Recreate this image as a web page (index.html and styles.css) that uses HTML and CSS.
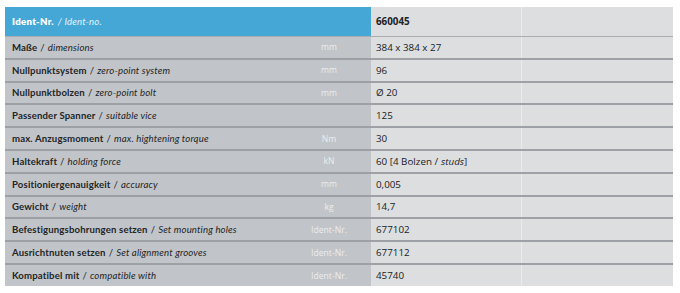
FILE: index.html
```html
<!DOCTYPE html>
<html>
<head>
<meta charset="utf-8">
<link rel="stylesheet" href="styles.css">
</head>
<body>
<div class="table">
  <div class="row head">
    <div class="label"><b>Ident-Nr.</b> <span class="it">/ Ident-no.</span></div>
    <div class="unit"></div>
    <div class="val"><b>660045</b></div>
    <div class="extra"></div>
  </div>
  <div class="row">
    <div class="label"><b>Maße</b> / <i>dimensions</i></div>
    <div class="unit">mm</div>
    <div class="val">384 x 384 x 27</div>
    <div class="extra"></div>
  </div>
  <div class="row">
    <div class="label"><b>Nullpunktsystem</b> / <i>zero-point system</i></div>
    <div class="unit">mm</div>
    <div class="val">96</div>
    <div class="extra"></div>
  </div>
  <div class="row">
    <div class="label"><b>Nullpunktbolzen</b> / <i>zero-point bolt</i></div>
    <div class="unit">mm</div>
    <div class="val">Ø 20</div>
    <div class="extra"></div>
  </div>
  <div class="row">
    <div class="label"><b>Passender Spanner</b> / <i>suitable vice</i></div>
    <div class="unit"></div>
    <div class="val">125</div>
    <div class="extra"></div>
  </div>
  <div class="row">
    <div class="label"><b>max. Anzugsmoment</b> / <i>max. hightening torque</i></div>
    <div class="unit">Nm</div>
    <div class="val">30</div>
    <div class="extra"></div>
  </div>
  <div class="row">
    <div class="label"><b>Haltekraft</b> / <i>holding force</i></div>
    <div class="unit">kN</div>
    <div class="val">60 [4 Bolzen / <i>studs</i>]</div>
    <div class="extra"></div>
  </div>
  <div class="row">
    <div class="label"><b>Positioniergenauigkeit</b> / <i>accuracy</i></div>
    <div class="unit">mm</div>
    <div class="val">0,005</div>
    <div class="extra"></div>
  </div>
  <div class="row">
    <div class="label"><b>Gewicht</b> / <i>weight</i></div>
    <div class="unit">kg</div>
    <div class="val">14,7</div>
    <div class="extra"></div>
  </div>
  <div class="row">
    <div class="label"><b>Befestigungsbohrungen setzen</b> / <i>Set mounting holes</i></div>
    <div class="unit">Ident-Nr.</div>
    <div class="val">677102</div>
    <div class="extra"></div>
  </div>
  <div class="row">
    <div class="label"><b>Ausrichtnuten setzen</b> / <i>Set alignment grooves</i></div>
    <div class="unit">Ident-Nr.</div>
    <div class="val">677112</div>
    <div class="extra"></div>
  </div>
  <div class="row last">
    <div class="label"><b>Kompatibel mit</b> / <i>compatible with</i></div>
    <div class="unit">Ident-Nr.</div>
    <div class="val">45740</div>
    <div class="extra"></div>
  </div>
</div>
</body>
</html>
```

FILE: styles.css
```css
html, body {
  margin: 0;
  padding: 0;
  background: #ffffff;
}
body {
  padding: 7px 0 0 5px;
}
.table {
  width: 668px;
  display: flex;
  flex-direction: column;
}
.row {
  display: grid;
  grid-template-columns: 286px 80px 151px 151px;
  height: 20.8px;
  border-bottom: 2px solid #9da1a6;
}
.row.last {
  border-bottom: none;
  height: 21.5px;
}
.row.head {
  height: 29px;
  border-bottom: 1px solid #a9adb1;
}
.label, .unit, .val, .extra {
  display: flex;
  align-items: center;
}
.label {
  background: #c1c4c9;
  padding-left: 7px;
  font-family: "Lato", "Noto Sans", sans-serif;
  font-size: 9.6px;
  color: #222426;
  white-space: nowrap;
  letter-spacing: 0.15px;
}
.label b {
  font-weight: 700;
  margin-right: 3px;
}
.label i {
  margin-left: 3px;
  font-style: italic;
  font-weight: 400;
}
.unit {
  background: #c1c4c9;
  justify-content: center;
  padding-right: 4px;
  font-family: "Open Sans", sans-serif;
  font-size: 8.6px;
  color: #eceef0;
}
.val {
  background: #dcdee0;
  padding-left: 5px;
  font-family: "Open Sans", sans-serif;
  font-size: 9.8px;
  color: #202224;
  border-right: 1px solid #e9ebec;
  white-space: nowrap;
}
.val i {
  font-style: italic;
  margin-left: 3px;
}
.extra {
  background: #dcdee0;
}
.head .label, .head .unit {
  background: #45a7d6;
  color: #ffffff;
}
.head .label b {
  font-weight: 800;
  letter-spacing: 0.3px;
}
.head .label .it {
  font-style: italic;
  color: #e3f2fa;
  margin-left: 1px;
}
.head .val b {
  font-weight: 700;
}
```
